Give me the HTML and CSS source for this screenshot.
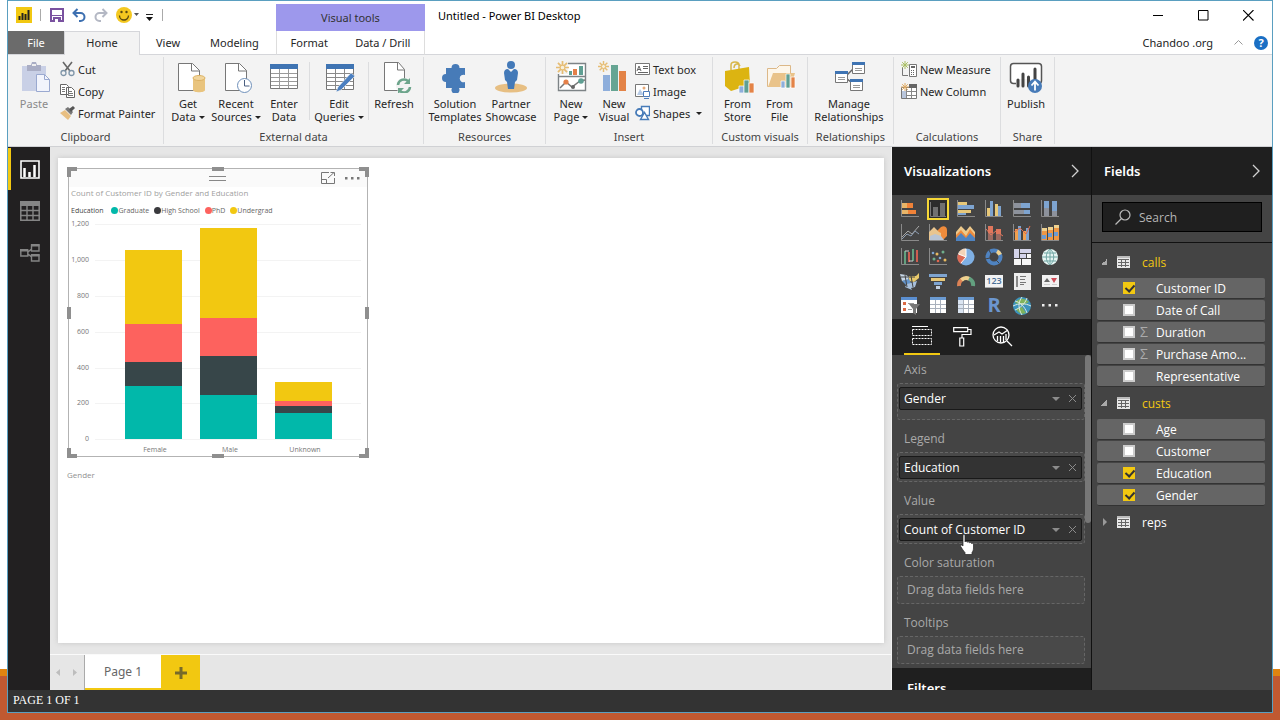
FILE: index.html
```html
<!DOCTYPE html>
<html lang="en">
<head>
<meta charset="utf-8">
<title>Untitled - Power BI Desktop</title>
<link rel="stylesheet" href="styles.css">
</head>
<body>
<svg class="sprites" aria-hidden="true">
  <symbol id="burst" viewBox="0 0 12 12"><path d="M6 0v12M0 6h12M1.8 1.8l8.4 8.4M10.2 1.8l-8.4 8.4" stroke="#e6bd74" stroke-width="1.6"/><circle cx="6" cy="6" r="2.2" fill="#f7efdc" stroke="#e6bd74"/></symbol>
  <symbol id="axes" viewBox="0 0 20 18"><path d="M1.500 0v16.500H19" fill="none" stroke="#8a8a8a"/></symbol>
  <symbol id="table" viewBox="0 0 13 12"><path d="M0 0h13v12H0z" fill="#e8e8e8"/><path d="M0 0h13v2H0z" fill="#bbb"/><path d="M1 3.500h11M1 6.500h11M1 9.500h11M4.500 3v8M8.500 3v8" stroke="#666"/></symbol>
  <symbol id="cross" viewBox="0 0 9 9"><path d="M1 1l7 7M8 1L1 8" stroke="#8c8c8c"/></symbol>
  <symbol id="chevron" viewBox="0 0 8 14"><path d="M1 1l6 6-6 6" fill="none" stroke="#d0d0d0" stroke-width="1.300"/></symbol>
</svg>
<div class="window">
  <header class="header">
    <div class="quick">
      <svg class="logo" width="16" height="16" viewBox="0 0 16 16"><path d="M0 0h16v16H0z" fill="#f2c811"/><path d="M3.500 13V9M6.500 13V6M9.500 13V7M12.500 13V3" stroke="#222" stroke-width="2"/></svg>
      <span class="bar"></span>
      <button class="qbtn" aria-label="Save"><svg width="14" height="14" viewBox="0 0 14 14"><path d="M1 1h12v12H1z" fill="#fff" stroke="#7a52a0" stroke-width="2"/><path d="M2 7h10v1H2zM3 9h8v5H3z" fill="#7a52a0"/><path d="M5 11h3v3H5z" fill="#fff"/></svg></button>
      <button class="qbtn" aria-label="Undo"><svg width="14" height="14" viewBox="0 0 14 14"><path d="M1 5h7.500a4 4 0 0 1 0 8H7M5.500 1l-4 4 4 4" fill="none" stroke="#3c6fb0" stroke-width="2"/></svg></button>
      <button class="qbtn" aria-label="Redo"><svg width="14" height="14" viewBox="0 0 14 14"><path d="M13 5H5.500a4 4 0 0 0 0 8H7M8.500 1l4 4-4 4" fill="none" stroke="#b4b8c4" stroke-width="2"/></svg></button>
      <button class="qbtn smile" aria-label="Send feedback"><svg width="23" height="16" viewBox="0 0 23 16"><circle cx="8" cy="8" r="8" fill="#f4c820"/><path d="M3.500 8.500a4.500 4.500 0 0 0 9 0" fill="none" stroke="#5b4a10" stroke-width="1.300"/><circle cx="5.500" cy="5" r="1.200" fill="#5b4a10"/><circle cx="10.500" cy="5" r="1.200" fill="#5b4a10"/><path d="M18 6h5l-2.500 3z" fill="#555"/></svg></button>
      <button class="qbtn" aria-label="Customize toolbar"><svg width="8" height="14" viewBox="0 0 8 14"><path d="M0 6.500h7" stroke="#222"/><path d="M0 9h7l-3.500 4z" fill="#111"/></svg></button>
      <span class="bar"></span>
    </div>
    <div class="context-title">Visual tools</div>
    <div class="caption">
      <span class="app-title">Untitled - Power BI Desktop</span>
      <button class="winbtn" aria-label="Minimize"><svg width="11" height="11"><path d="M0 5.500h10" stroke="#000"/></svg></button>
      <button class="winbtn" aria-label="Maximize"><svg width="11" height="11"><path d="M.5.500h9.500v9.500H.5z" fill="none" stroke="#000"/></svg></button>
      <button class="winbtn" aria-label="Close"><svg width="11" height="11"><path d="M0 0l10.500 10.500M10.500 0L0 10.500" stroke="#000" stroke-width="1.100"/></svg></button>
    </div>
    <nav class="tabs">
      <button class="tab file">File</button><button class="tab home">Home</button><button class="tab view">View</button><button class="tab">Modeling</button>
    </nav>
    <nav class="tabs context"><button class="tab">Format</button><button class="tab">Data / Drill</button></nav>
    <div class="account">
      <span>Chandoo .org</span>
      <button class="qbtn" aria-label="Collapse ribbon"><svg width="9" height="5"><path d="M.5 4.500l4-4 4 4" fill="none" stroke="#999"/></svg></button>
      <button class="help" aria-label="Help">?</button>
    </div>
  </header>

  <section class="ribbon">
    <div class="group g-clip">
      <div class="body">
        <button class="big off"><svg width="36" height="32"><path d="M6 5h24v25H6z" fill="#c9d0e6"/><path d="M11 4h4l1-3h4l1 3h4v6H11z" fill="#a9adc4"/><path d="M16 3h4v2h-4z" fill="#eee"/><path d="M20.500 13.500h8l5 5v12h-13z" fill="#f2f4fc" stroke="#9aa9d0"/><path d="M28.500 13.500v5h5" fill="none" stroke="#9aa9d0"/></svg><span>Paste</span></button>
        <div class="stack">
          <button class="small"><svg width="15" height="16"><path d="M3 1l7 9M12 1L5 10" stroke="#666" stroke-width="1.600"/><circle cx="3.500" cy="12" r="2.500" fill="none" stroke="#7f95a8" stroke-width="1.300"/><circle cx="11.500" cy="12" r="2.500" fill="none" stroke="#7f95a8" stroke-width="1.300"/></svg>Cut</button>
          <button class="small"><svg width="15" height="16"><path d="M.5 1.500h6l2 2v8h-8zM6.500 4.500h5l3 3v7h-8z" fill="#fff" stroke="#666"/><path d="M2 4.500h3M2 6.500h3M2 8.500h3M8 8.500h4M8 10.500h5M8 12.500h5" stroke="#777"/></svg>Copy</button>
          <button class="small"><svg width="15" height="16"><path d="M0 8l5-3 6 6-3 4z" fill="#e8bf82"/><path d="M5 4l3-2 5 5-2 3z" fill="#777"/><path d="M9 4l4-3 2 2-4 4z" fill="#555"/></svg>Format Painter</button>
        </div>
      </div>
      <h2>Clipboard</h2>
    </div>
    <div class="group g-data">
      <div class="body">
        <button class="big"><svg width="36" height="32"><path d="M8.500 2.500h14l7 7v20h-21z" fill="#fff" stroke="#777"/><path d="M21.500 2.500v7.500h8" fill="none" stroke="#777"/><path d="M23 17v12c0 3 12 3 12 0V17z" fill="#e9c47e"/><ellipse cx="29" cy="17" rx="6" ry="2.500" fill="#f1d59c" stroke="#dcb264"/></svg><span>Get<br>Data<i class="drop"></i></span></button>
        <button class="big"><svg width="36" height="32"><path d="M7.500 2.500h14l7 7v20h-21z" fill="#fff" stroke="#777"/><path d="M20.500 2.500v7.500h8" fill="none" stroke="#777"/><circle cx="26.500" cy="24.500" r="7" fill="#fff" stroke="#6f90ba"/><path d="M26.500 19v6h5" fill="none" stroke="#4a5f80"/></svg><span>Recent<br>Sources<i class="drop"></i></span></button>
        <button class="big"><svg width="36" height="32"><path d="M4.500 3.500h27v24h-27z" fill="#fff" stroke="#777"/><path d="M4 3h28v5H4z" fill="#3f74b3"/><path d="M5 12.500h26M5 16.500h26M5 20.500h26M5 24.500h26M13.500 8v19M22.500 8v19" stroke="#9a9a9a"/></svg><span>Enter<br>Data</span></button>
        <span class="rule"></span>
        <button class="big w56"><svg width="36" height="32"><path d="M5.500 3.500h27v25h-27z" fill="#fff" stroke="#777"/><path d="M5 3h28v5H5z" fill="#3f74b3"/><path d="M6 12.500h26M6 16.500h26M6 20.500h26M6 24.500h26M14.500 8v20M23.500 8v20" stroke="#8a8a8a"/><path d="M15 31l2-5L30 12l4 3-14 14z" fill="#4b7fc0" stroke="#f3f3f3" stroke-width=".6"/></svg><span>Edit<br>Queries<i class="drop"></i></span></button>
        <span class="rule"></span>
        <button class="big"><svg width="36" height="32"><path d="M8.500 1.500h14l6 7v21h-20z" fill="#fff" stroke="#777"/><path d="M21.500 1.500v7.500h7" fill="none" stroke="#777"/><circle cx="28" cy="25" r="8" fill="#f3f3f3"/><path d="M22 24a6 6 0 0 1 10-4M34 26a6 6 0 0 1-10 4" fill="none" stroke="#6da58c" stroke-width="2.500"/><path d="M34 17v6h-6zM22 33v-6h6z" fill="#6da58c"/></svg><span>Refresh</span></button>
      </div>
      <h2>External data</h2>
    </div>
    <div class="group g-res">
      <div class="body center">
        <button class="big w56"><svg width="36" height="32"><path d="M9 7h5.500a4 4 0 1 1 8 0H28v7a3.800 3.800 0 1 0 0 7v6h-6a4 4 0 1 1-7 0H9v-6a4 4 0 1 1 0-8z" fill="#477bb8"/></svg><span>Solution<br>Templates</span></button>
        <button class="big w56"><svg width="36" height="32"><ellipse cx="18" cy="27" rx="16" ry="4.500" fill="#e7bf83"/><circle cx="18" cy="4" r="4" fill="#4379b8"/><path d="M15 8l3 3 3-3c3 0 4 2 4 4l-1 7-2 2-1 7h-6l-1-7-2-2-1-7c0-2 1-4 4-4z" fill="#4379b8"/></svg><span>Partner<br>Showcase</span></button>
      </div>
      <h2>Resources</h2>
    </div>
    <div class="group g-ins">
      <div class="body">
        <button class="big w44"><svg width="36" height="32"><path d="M5.500 2.500h27v27h-27zM5 15.500h27" fill="#fff" stroke="#7d8386" stroke-width="1.400"/><path d="M16 10h3v4h-3zM26 5h4v9h-4z" fill="#5f9f93"/><path d="M20 8h4v6h-4z" fill="#e48049"/><path d="M7 27l6-6 6 5 8-6 5-1" fill="none" stroke="#777" stroke-width="1.500"/><circle cx="13" cy="21" r="2.600" fill="#e48049"/><circle cx="20" cy="26" r="2" fill="#666"/><circle cx="28" cy="20" r="2.800" fill="#5f9f93"/><path d="M3 0h12v13H3z" fill="#f3f3f3"/><use href="#burst" x="3" y="0" width="13" height="13"/></svg><span>New<br>Page<i class="drop"></i></span></button>
        <button class="big w42"><svg width="36" height="32"><path d="M7 14h7v16H7z" fill="#8eaedb"/><path d="M15 4h7v26h-7z" fill="#66a593"/><path d="M23 10h7v20h-7z" fill="#e38347"/><use href="#burst" x="2" y="0" width="11" height="11"/></svg><span>New<br>Visual</span></button>
        <div class="stack">
          <button class="small"><svg width="15" height="16"><path d="M.5 2.500h14v11H.5z" fill="#fff" stroke="#777"/><path d="M2 10l2-5 2 5M3 8.500h2M8 5.500h5M8 7.500h5M3 11.500h10" fill="none" stroke="#666"/></svg>Text box</button>
          <button class="small"><svg width="15" height="16"><path d="M.5 1.500h13v12H.5z" fill="#fff" stroke="#777"/><circle cx="9" cy="5" r="1.500" fill="#e6a877"/><path d="M2 12l3-6 4 6z" fill="#b7cbe6"/><path d="M8.500 8.500h6v5h-6zM9 15.500h5" fill="#fff" stroke="#4f7dbb"/></svg>Image</button>
          <button class="small"><svg width="15" height="16"><path d="M6.500 1.500h8v9h-8z" fill="#fff" stroke="#477bb8" stroke-width="1.400"/><circle cx="4.500" cy="7.500" r="3.500" fill="#fff" stroke="#477bb8" stroke-width="1.800"/><path d="M5.500 14.500l4-7 4 7z" fill="#fff" stroke="#477bb8" stroke-width="1.400"/></svg>Shapes<i class="drop"></i></button>
        </div>
      </div>
      <h2>Insert</h2>
    </div>
    <div class="group g-cust">
      <div class="body center">
        <button class="big w42"><svg width="36" height="32"><path d="M11 9V4c0-4 8-4 8 0v4M14 7c0-5 5-5 6-2" fill="none" stroke="#d8b74a" stroke-width="1.500"/><path d="M5 10l24-4 1 18-19 6-6-5z" fill="#dcb411"/><path d="M19 25h5v7h-5z" fill="#8eaedb" stroke="#fff" stroke-width=".7"/><path d="M24 19h5v13h-5z" fill="#5f9f93" stroke="#fff" stroke-width=".7"/><path d="M29 22h5v10h-5z" fill="#e38347" stroke="#fff" stroke-width=".7"/></svg><span>From<br>Store</span></button>
        <button class="big w42"><svg width="36" height="32"><path d="M5.500 25.500v-18h9l3-3h11v21z" fill="#fdf6ea" stroke="#dcb888"/><path d="M6 26l5-14h22l-4 14z" fill="#e9c38a"/><path d="M19 20h4v7h-4z" fill="#8eaedb" stroke="#fff" stroke-width=".7"/><path d="M24 13h4v14h-4z" fill="#5f9f93" stroke="#fff" stroke-width=".7"/><path d="M29 16h4v11h-4z" fill="#e38347" stroke="#fff" stroke-width=".7"/></svg><span>From<br>File</span></button>
      </div>
      <h2>Custom visuals</h2>
    </div>
    <div class="group g-rel">
      <div class="body center">
        <button class="big wide"><svg width="36" height="32"><path d="M15 15l8-8M15 17l6 5" stroke="#666" stroke-width="1.500"/><path d="M21.500 1.500h12v11h-12zM4.500 10.500h12v11h-12zM19.500 18.500h12v11h-12z" fill="#fff" stroke="#777"/><path d="M21 1h13v3H21zM4 10h13v3H4zM19 18h13v3H19z" fill="#3f74b3"/><path d="M24 7.500h7M24 9.500h7M7 16.500h7M7 18.500h7M22 24.500h7M22 26.500h7" stroke="#999"/></svg><span>Manage<br>Relationships</span></button>
      </div>
      <h2>Relationships</h2>
    </div>
    <div class="group g-calc">
      <div class="body">
        <div class="stack">
          <button class="small"><svg width="16" height="16"><path d="M1.500 6v8.500H7" fill="none" stroke="#777"/><path d="M8.500 3.500h7v12h-7z" fill="#fff" stroke="#777"/><path d="M10 5h4v2h-4zM10 9h1v1h-1zM12 9h1v1h-1zM10 11h1v1h-1zM12 11h1v1h-1zM10 13h1v1h-1zM12 13h1v1h-1z" fill="#666"/><path d="M4 0v8M0 4h8M1.200 1.200l5.600 5.600M6.800 1.200L1.200 6.800" stroke="#a9bf63"/></svg>New Measure</button>
          <button class="small"><svg width="16" height="16"><path d="M.5 4.500h15v11H.5z" fill="#fff" stroke="#777"/><path d="M8 1h8v4H8z" fill="#666"/><path d="M1 8h4v7H1z" fill="#b9c6dc"/><path d="M5.500 5v10M10.500 5v10M5 8.500h10M5 12.500h10" stroke="#888"/><path d="M4 0v8M0 4h8M1.200 1.200l5.600 5.600M6.800 1.200L1.200 6.800" stroke="#e0aa62"/></svg>New Column</button>
        </div>
      </div>
      <h2>Calculations</h2>
    </div>
    <div class="group g-share">
      <div class="body center">
        <button class="big"><svg width="36" height="32"><rect x="2.500" y="2.500" width="31" height="20" rx="3" fill="#fff" stroke="#555" stroke-width="1.500"/><path d="M8 18h22v7H8z" fill="#f3f3f3"/><path d="M10 25v-6M15 25V13M20.500 25v-9M27 20V8" stroke="#444" stroke-width="3" stroke-linecap="round"/><circle cx="27" cy="25" r="7" fill="#477bb8"/><path d="M27 29.500v-8M23.500 24.500l3.500-4 3.500 4" fill="none" stroke="#fff" stroke-width="1.800"/></svg><span>Publish</span></button>
      </div>
      <h2>Share</h2>
    </div>
  </section>

  <main class="work">
    <nav class="rail">
      <button class="on" aria-label="Report"><svg width="20" height="19"><path d="M1 1h18v17H1z" fill="none" stroke="#fff" stroke-width="1.600"/><path d="M4.500 17V8M9.500 17v-5M14.500 17V5" stroke="#fff" stroke-width="2.500"/></svg></button>
      <button aria-label="Data"><svg width="20" height="20"><path d="M.8.800h18.400v18.400H.8z" fill="none" stroke="#858585" stroke-width="1.500"/><path d="M0 0h20v5H0z" fill="#858585"/><path d="M0 9.500h20M0 14.500h20M7 5v15M13 5v15" stroke="#858585" stroke-width="1.400"/></svg></button>
      <button aria-label="Relationships"><svg width="20" height="18"><path d="M.8 6h7v6h-7zM11.500 1h7.500v6h-7.500zM11.500 11h7.500v6h-7.500zM8 8l3.500-3M8 10l3.500 3" fill="none" stroke="#858585" stroke-width="1.400"/><path d="M0 5h8v2.500H0zM11 0h8.500v2.500H11zM11 10h8.500v2.500H11z" fill="#858585"/></svg></button>
    </nav>

    <section class="report">
      <div class="page">
        <figure class="visual">
          <div class="grips"><i></i><i></i><i></i><i></i><i></i><i></i><i></i><i></i></div>
          <div class="vhead">
            <svg class="drag" width="17" height="5"><path d="M0 .5h17M0 4.500h17" stroke="#888"/></svg>
            <button class="qbtn" aria-label="Focus mode"><svg width="14" height="12"><path d="M8 .5H.5v11h13V6M.5 7.500h5v4M7 6l6-5.500M9.500.500h4v3.500" fill="none" stroke="#777"/></svg></button>
            <button class="qbtn" aria-label="More options"><svg width="15" height="3"><path d="M0 0h2.500v2.500H0zM6 0h2.500v2.500H6zM12 0h2.500v2.500H12z" fill="#777"/></svg></button>
          </div>
          <figcaption>Count of Customer ID by Gender and Education</figcaption>
          <div class="legend"><b>Education</b><span class="k teal">Graduate</span><span class="k dark">High School</span><span class="k red">PhD</span><span class="k gold">Undergrad</span></div>
          <svg class="plot" width="298" height="239" viewBox="0 0 298 239">
            <path d="M26 6.500h266M26 42.500h266M26 78.500h266M26 114.500h266M26 150.500h266M26 185.500h266M26 221.500h266" stroke="#f3f3f3"/>
            <g class="ticks" text-anchor="end"><text x="20" y="8">1,200</text><text x="20" y="44">1,000</text><text x="20" y="80">800</text><text x="20" y="116">600</text><text x="20" y="152">400</text><text x="20" y="187">200</text><text x="20" y="223">0</text></g>
            <path d="M56 32h57v74H56zM131 10h57v90h-57zM206 164h57v19h-57z" fill="#f2c811"/>
            <path d="M56 106h57v38H56zM131 100h57v38h-57zM206 183h57v5h-57z" fill="#fd625e"/>
            <path d="M56 144h57v24H56zM131 138h57v39h-57zM206 188h57v7h-57z" fill="#374649"/>
            <path d="M56 168h57v53H56zM131 177h57v44h-57zM206 195h57v26h-57z" fill="#01b8aa"/>
            <g class="ticks" text-anchor="middle"><text x="86" y="234">Female</text><text x="161" y="234">Male</text><text x="236" y="234">Unknown</text></g>
          </svg>
          <div class="axis-title">Gender</div>
        </figure>
      </div>
      <nav class="pages">
        <button class="step" aria-label="Previous page"><svg width="4" height="7"><path d="M4 0v7L0 3.500z" fill="#bdbdbd"/></svg></button>
        <button class="step next" aria-label="Next page"><svg width="4" height="7"><path d="M0 0v7l4-3.500z" fill="#bdbdbd"/></svg></button>
        <button class="ptab">Page 1</button>
        <button class="add" aria-label="New page"><svg width="12" height="12"><path d="M6 0v12M0 6h12" stroke="#776a2a" stroke-width="3"/></svg></button>
      </nav>
    </section>

    <aside class="pane viz">
      <h2 class="phead">Visualizations<button class="qbtn" aria-label="Collapse Visualizations"><svg width="8" height="14"><use href="#chevron"/></svg></button></h2>
      <div class="gallery">
        <button aria-label="Stacked bar chart"><svg width="20" height="18"><use href="#axes"/><path d="M2 3h5v5H2zM2 10h6v4H2z" fill="#e8b568"/><path d="M7 3h6v5H7zM8 10h8v4H8z" fill="#f08238"/></svg></button>
        <button class="on" aria-label="Stacked column chart"><svg width="18" height="18"><path d="M1.500 2v14.500H17" fill="none" stroke="#777"/><path d="M4 7h5v9H4zM11 3h5v13h-5z" fill="#707070"/></svg></button>
        <button aria-label="Clustered bar chart"><svg width="20" height="18"><use href="#axes"/><path d="M2 2h9v3H2zM2 10h13v3H2z" fill="#e8c878"/><path d="M2 5h16v4H2zM2 13h8v2H2z" fill="#7ea4d0"/></svg></button>
        <button aria-label="Clustered column chart"><svg width="20" height="18"><use href="#axes"/><path d="M3 8h3v8H3zM11 4h3v12h-3z" fill="#e8c878"/><path d="M6 1h3v15H6zM14 6h3v10h-3z" fill="#7ea4d0"/></svg></button>
        <button aria-label="100% stacked bar chart"><svg width="20" height="18"><use href="#axes"/><path d="M2 3h7v5H2zM2 10h10v4H2z" fill="#8d929c"/><path d="M9 3h9v5H9zM12 10h6v4h-6z" fill="#7ea4d0"/></svg></button>
        <button aria-label="100% stacked column chart"><svg width="20" height="18"><use href="#axes"/><path d="M4 1h5v7H4zM12 1h5v10h-5z" fill="#7ea4d0"/><path d="M4 8h5v8H4zM12 11h5v5h-5z" fill="#8d929c"/></svg></button>
        <button aria-label="Line chart"><svg width="20" height="18"><use href="#axes"/><path d="M2 13l6-6 4 3 7-8" fill="none" stroke="#aaa"/><path d="M2 15l5-5 4 2 4-5 4 3" fill="none" stroke="#8f9fb4"/></svg></button>
        <button aria-label="Area chart"><svg width="20" height="18"><use href="#axes"/><path d="M8 16V8l5-5c3-2 6 0 6 3v6l-4 4z" fill="#ee8b3c"/><path d="M1 8l5-5 5 5 2 1v7H1z" fill="#e8c590"/><path d="M2 16v-4l5-2 6 2 3 4z" fill="#b9c4d4"/></svg></button>
        <button aria-label="Stacked area chart"><svg width="20" height="18"><path d="M0 16V8l5-6 5 5 4-5 5 6v8z" fill="#ecc98c"/><path d="M0 11l5-5 5 6 4-7 5 6v4H0z" fill="#ee8b3c"/><path d="M0 14l5-5 5 5 4-5 5 5v3H0z" fill="#4f83c0"/></svg></button>
        <button aria-label="Line and stacked column chart"><svg width="20" height="18"><use href="#axes"/><path d="M4 2h5v7H4zM12 5h5v5h-5z" fill="#e0765c"/><path d="M4 9h5v7H4zM12 10h5v6h-5z" fill="#9c6a60"/><path d="M2 5l5 6 5-4 7 5" fill="none" stroke="#e0765c"/></svg></button>
        <button aria-label="Line and clustered column chart"><svg width="20" height="18"><use href="#axes"/><path d="M3 5h3v11H3zM11 7h3v9h-3z" fill="#f0a050"/><path d="M6 2h3v14H6zM14 4h3v12h-3z" fill="#7ea4d0"/><path d="M2 8l6-4 6 6 4-8" fill="none" stroke="#e06a4b"/></svg></button>
        <button aria-label="Ribbon chart"><svg width="20" height="18"><use href="#axes"/><path d="M2 6h5v10H2zM8 5h5v11H8zM14 2h5v14h-5z" fill="#ef9744"/><path d="M2 11h4v4H2zM8 9h4v4H8zM14 8h4v4h-4z" fill="#6b9bd2"/><path d="M2 4h5v3H2zM8 3h5v3H8zM14 1h5v3h-5z" fill="#eed18f"/></svg></button>
        <button aria-label="Waterfall chart"><svg width="20" height="18"><use href="#axes"/><path d="M5 16V3M13 13V1" stroke="#63a07f" stroke-width="2"/><path d="M9 4v10M17 2v12" stroke="#cf5d50" stroke-width="2"/><path d="M5 3h4M9 13h4" stroke="#ccc"/></svg></button>
        <button aria-label="Scatter chart"><svg width="20" height="18"><use href="#axes"/><g fill="#7ea4d0"><circle cx="5" cy="5" r="1.300"/><circle cx="12" cy="10" r="1.300"/></g><g fill="#e8b95f"><circle cx="9" cy="6" r="1.500"/><circle cx="17" cy="12" r="1.500"/></g><g fill="#6fae8b"><circle cx="6" cy="11" r="1.500"/><circle cx="15" cy="4" r="1.500"/></g><circle cx="10" cy="13" r="1.300" fill="#e0664f"/></svg></button>
        <button aria-label="Pie chart"><svg width="20" height="18"><circle cx="10" cy="9" r="8.500" fill="#7fb0e4"/><path d="M10 9V.5A8.500 8.500 0 0 0 2 6z" fill="#f3d4b8"/><path d="M10 9L2 6a8.500 8.500 0 0 0 3 10z" fill="#dc6a55"/><path d="M10 1v8l-5 6M10 9L2.500 6" fill="none" stroke="#fff"/></svg></button>
        <button aria-label="Donut chart"><svg width="20" height="18"><circle cx="10" cy="9" r="6.500" fill="none" stroke="#4f83c0" stroke-width="4"/><path d="M13 3.200a6.500 6.500 0 0 1 3 3.500" fill="none" stroke="#eed18f" stroke-width="4"/><path d="M5 2l2 4M1 11l5-1M15 15l-3-3" stroke="#444"/></svg></button>
        <button aria-label="Treemap"><svg width="20" height="18"><path d="M2 1h5v9H2zM8 1h11v4H8zM8 6h6v4H8z" fill="#d4d4ea"/><path d="M15 6h4v4h-4zM2 11h7v6H2zM10 11h9v6h-9z" fill="#f6f6f6"/></svg></button>
        <button aria-label="Map"><svg width="20" height="18"><circle cx="10" cy="9" r="8" fill="#e6f5f3"/><path d="M2 9h16M4 5h12M4 13h12M10 1v16M10 1c-5 4-5 12 0 16 5-4 5-12 0-16" fill="none" stroke="#6fa5a3"/></svg></button>
        <button aria-label="Filled map"><svg width="20" height="18"><path d="M0 2l6 1 3 2-1 3-6 1z" fill="#c8d8e8"/><path d="M9 4l7 0 3-3v5l-5 4-5-1z" fill="#e8c96b"/><path d="M2 9l7-2 2 4-5 2z" fill="#6394cc"/><path d="M7 12l10-3-2 6-4 1 1 2-7-3z" fill="#a8c0dc"/><path d="M1 5h14M5 3l2 12M11 4l2 11" stroke="#444"/></svg></button>
        <button aria-label="Funnel"><svg width="20" height="18"><path d="M1 2h18v3H1z" fill="#7ea4d0"/><path d="M3 6h14v3H3z" fill="#e8c878"/><path d="M6 10h8v3H6z" fill="#7ea4d0"/><path d="M8 14h4v3H8z" fill="#c3d0e0"/></svg></button>
        <button aria-label="Gauge"><svg width="20" height="18"><path d="M3 14a7 7 0 0 1 4-7" fill="none" stroke="#dc8255" stroke-width="4"/><path d="M5.500 8a7 7 0 0 1 8-1" fill="none" stroke="#eed18f" stroke-width="4"/><path d="M13 6.500a7 7 0 0 1 4 7.500" fill="none" stroke="#63a07f" stroke-width="4"/></svg></button>
        <button class="card" aria-label="Card"><span>123</span></button>
        <button aria-label="Multi-row card"><svg width="20" height="18"><path d="M2 1h17v17H2z" fill="#eee"/><path d="M4 4h2v11H4z" fill="#888"/><path d="M8 4.500h6M8 7.500h5M8 10.500h6M8 12.500h4" stroke="#777"/></svg></button>
        <button aria-label="KPI"><svg width="20" height="18"><path d="M2 3h17v12H2z" fill="#f1f1f1"/><path d="M4 10l3-4 3 4z" fill="#666"/><path d="M11 6h6l-3 5z" fill="#cf4c58"/><path d="M4 12.500h6M12 12.500h5" stroke="#ccc"/></svg></button>
        <button aria-label="Slicer"><svg width="20" height="19"><path d="M1 1h16v16H1z" fill="#fff"/><path d="M1 1h16v3H1z" fill="#5a8ed0"/><path d="M3 6h3v3H3zM3 12h3v3H3z" fill="#dc6a45"/><path d="M8 7.500h6M8 13.500h4" stroke="#999"/><path d="M9 8h11l-4 5v6l-3-2v-4z" fill="#777"/></svg></button>
        <button aria-label="Table"><svg width="20" height="18"><path d="M2 1h16v16H2z" fill="#fff"/><path d="M2 1h16v3H2z" fill="#6b9bd2"/><path d="M2 8.500h16M2 12.500h16M7.500 4v13M12.500 4v13" stroke="#a8b0bc"/></svg></button>
        <button aria-label="Matrix"><svg width="20" height="18"><path d="M2 1h16v16H2z" fill="#fff"/><path d="M2 1h16v3H2z" fill="#6b9bd2"/><path d="M2 4h5v13H2z" fill="#dbe5f2"/><path d="M2 8.500h16M2 12.500h16M7.500 4v13M12.500 4v13" stroke="#a8b0bc"/></svg></button>
        <button class="rscript" aria-label="R script visual"><span>R</span></button>
        <button aria-label="ArcGIS map"><svg width="20" height="19"><circle cx="10" cy="10" r="9" fill="#3c93bd"/><path d="M3 7c4-6 10-5 14-1l-6 3zM4 13l6-2 4 6c-4 2-8 0-10-4z" fill="#7fb35c"/><path d="M1 10c6-3 12-3 18 0M3 5c5 1 10 6 12 12M10 1c-4 5-4 12 0 18M3 14c5-2 10-6 12-12" fill="none" stroke="#dbe9e2"/></svg></button>
        <button aria-label="Import visual"><svg width="16" height="3"><path d="M0 0h2.500v2.500H0zM6.500 0H9v2.500H6.500zM13 0h2.500v2.500H13z" fill="#eee"/></svg></button>
      </div>
      <div class="ptabs">
        <button class="on" aria-label="Fields"><svg width="20" height="20"><path d="M0 .5h16" stroke="#fff"/><path d="M.5 3.500h19v6H.5zM.5 12.500h19v6H.5z" fill="none" stroke="#fff" stroke-dasharray="2 1"/></svg></button>
        <button aria-label="Format"><svg width="19" height="21"><path d="M.7 1.700h14v4h-14zM15 3.500h3v5H9v3M6.800 12h3.900v8H6.800z" fill="none" stroke="#fff" stroke-width="1.200"/></svg></button>
        <button aria-label="Analytics"><svg width="21" height="21"><circle cx="9" cy="9" r="8" fill="none" stroke="#fff" stroke-width="1.300"/><path d="M15 15l5 5M2 9l5-3 3 2 6-4M5.500 10v5M8.500 10v6.500M11.500 10v6M14 8v6" fill="none" stroke="#fff" stroke-width="1.300"/></svg></button>
      </div>
      <div class="wells">
        <h3>Axis</h3>
        <div class="well roomy"><div class="pill"><span>Gender</span><button class="qbtn" aria-label="Gender options"><i class="tri"></i></button><button class="qbtn" aria-label="Remove Gender"><svg width="9" height="9"><use href="#cross"/></svg></button></div></div>
        <h3>Legend</h3>
        <div class="well"><div class="pill"><span>Education</span><button class="qbtn" aria-label="Education options"><i class="tri"></i></button><button class="qbtn" aria-label="Remove Education"><svg width="9" height="9"><use href="#cross"/></svg></button></div></div>
        <h3>Value</h3>
        <div class="well"><div class="pill"><span>Count of Customer ID</span><button class="qbtn" aria-label="Value options"><i class="tri"></i></button><button class="qbtn" aria-label="Remove value"><svg width="9" height="9"><use href="#cross"/></svg></button></div>
          <svg class="pointer" width="15" height="21" viewBox="0 0 15 21"><path d="M3 1.500c0-1.300 2-1.300 2 0V8c.5-1 2-.8 2.200.3.500-.8 2-.6 2.200.5.600-.7 2-.4 2.100.7.700-.4 2 .1 2 1.200V14c0 2-.8 3.500-1.500 4.500v2H5v-2C3.500 17 2 14.500.7 12.500-.2 11 1.500 10.400 3 12z" fill="#fff" stroke="#222" stroke-width=".7"/></svg>
        </div>
        <h3>Color saturation</h3>
        <div class="well empty">Drag data fields here</div>
        <h3>Tooltips</h3>
        <div class="well empty">Drag data fields here</div>
        <h2 class="filters">Filters</h2>
        <i class="thumb"></i>
      </div>
    </aside>

    <aside class="pane fields">
      <h2 class="phead">Fields<button class="qbtn" aria-label="Collapse Fields"><svg width="8" height="14"><use href="#chevron"/></svg></button></h2>
      <div class="search"><label><svg width="16" height="16"><circle cx="10" cy="6" r="5" fill="none" stroke="#bbb" stroke-width="1.200"/><path d="M6.500 9.500L.5 15.500" stroke="#bbb" stroke-width="1.200"/></svg><input type="text" placeholder="Search" aria-label="Search"></label></div>
      <div class="tree">
        <h3 class="used"><i class="open"></i><svg width="13" height="12"><use href="#table"/></svg>calls</h3>
        <label class="field"><input type="checkbox" checked><i></i><span>Customer ID</span></label>
        <label class="field"><input type="checkbox"><i></i><span>Date of Call</span></label>
        <label class="field"><input type="checkbox"><i>Σ</i><span>Duration</span></label>
        <label class="field"><input type="checkbox"><i>Σ</i><span>Purchase Amo...</span></label>
        <label class="field"><input type="checkbox"><i></i><span>Representative</span></label>
        <h3 class="used"><i class="open"></i><svg width="13" height="12"><use href="#table"/></svg>custs</h3>
        <label class="field"><input type="checkbox"><i></i><span>Age</span></label>
        <label class="field"><input type="checkbox"><i></i><span>Customer</span></label>
        <label class="field"><input type="checkbox" checked><i></i><span>Education</span></label>
        <label class="field"><input type="checkbox" checked><i></i><span>Gender</span></label>
        <h3><i class="shut"></i><svg width="13" height="12"><use href="#table"/></svg>reps</h3>
      </div>
    </aside>
  </main>
  <footer class="status">PAGE 1 OF 1</footer>
</div>
</body>
</html>
```
FILE: styles.css
```css
* { box-sizing: border-box; }
body {
  margin: 0;
  min-height: 100vh;
  padding: 0 7px 7px;
  background: linear-gradient(to top, #c05931 44px, #e08410 44px, #e08410 51px, #fff 51px);
  font-family: "Noto Sans", "Open Sans", sans-serif;
  font-size: 12px;
  color: #262626;
}
h2, h3, figure { margin: 0; font-weight: 400; }
button { border: 0; padding: 0; margin: 0; background: none; font: inherit; color: inherit; }
svg { display: block; flex: none; }
.sprites { position: absolute; width: 0; height: 0; }
.window { display: flex; flex-direction: column; height: calc(100vh - 7px); border: 1px solid #5a9fc0; background: #fff; }

/* title bar and ribbon tabs */
.header { display: grid; grid-template-columns: 268px 149px 1fr; grid-template-rows: 30px 24px; font-size: 11px; }
.quick { display: flex; align-items: center; gap: 8px; padding: 0 0 2px 8px; }
.bar { width: 1px; height: 12px; background: #aaa; }
.quick .bar + .qbtn { margin-left: 1px; }
.quick .smile { margin-right: -1px; }
.qbtn { display: flex; align-items: center; justify-content: center; }
.context-title { margin-top: 3px; background: #9d98ec; display: flex; align-items: center; justify-content: center; color: #333; font-size: 11px; }
.caption { display: flex; align-items: center; padding-bottom: 2px; }
.app-title { flex: 1; padding-left: 13px; color: #000; }
.winbtn { width: 45px; height: 28px; display: flex; align-items: center; justify-content: center; }
.caption .winbtn:last-child { margin-right: 1px; }
.tabs { display: flex; border-bottom: 1px solid #d5d6da; }
.tab { padding: 0 14px; }
.tab.file { width: 56px; background: #6b6b6b; color: #fff; }
.tab.home { width: 76px; margin-bottom: -1px; padding-bottom: 2px; background: #f3f3f3; border: 1px solid #d5d6da; border-bottom: 0; }
.tab.view { width: 56px; }
.context { border-left: 1px solid #ddd; border-right: 1px solid #ddd; }
.context .tab { padding: 0 13px; flex: auto; white-space: nowrap; }
.account { display: flex; align-items: center; justify-content: flex-end; border-bottom: 1px solid #d5d6da; padding-right: 4px; }
.account span { margin-right: 21px; color: #222; }
.account .help { width: 14px; height: 14px; margin-left: 11px; border-radius: 50%; background: #1a6fc4; color: #fff; font-weight: 700; font-size: 11px; line-height: 14px; }

/* ribbon */
.ribbon { display: flex; flex: none; background: #f3f3f3; border-bottom: 1px solid #d0d1d4; font-size: 11px; }
.group { display: flex; flex-direction: column; flex: none; margin: 2px 0; border-right: 1px solid #dcdddf; }
.group h2 { font-size: 11px; line-height: 14px; text-align: center; color: #444; white-space: nowrap; }
.body { display: flex; height: 73px; padding-top: 1px; }
.center { justify-content: center; padding-right: 3px; }
.g-clip { width: 156px; }
.g-data { width: 260px; }
.g-res { width: 122px; }
.g-ins { width: 167px; }
.g-cust { width: 95px; }
.g-rel { width: 86px; }
.g-calc { width: 107px; }
.g-share { width: 54px; }
.g-ins .body { padding-left: 3px; }
.g-calc .body { padding-left: 7px; }
.big { width: 48px; padding-top: 3px; display: flex; flex-direction: column; align-items: center; gap: 4px; line-height: 13px; white-space: nowrap; }
.big.w56 { width: 56px; }
.big.w44 { width: 44px; }
.big.w42 { width: 42px; }
.big.wide { width: 72px; }
.g-clip .big { width: 52px; }
.off { color: #8a8a8a; }
.rule { width: 1px; margin: 4px 1px 10px; background: #dcdddf; }
.drop { display: inline-block; margin-left: 3px; border: 3px solid transparent; border-top-color: #222; border-bottom: 0; vertical-align: 2px; }
.stack { display: flex; flex-direction: column; }
.small { display: flex; align-items: center; gap: 3px; height: 22px; white-space: nowrap; }

/* workspace */
.work { flex: 1; min-height: 0; display: flex; }
.rail { width: 42px; padding-top: 1px; background: #222021; }
.rail button { display: flex; width: 100%; height: 42px; align-items: center; justify-content: center; border-left: 3px solid transparent; padding-right: 2px; }
.rail .on { border-color: #f2c811; }
.report { flex: 1; min-width: 0; display: flex; flex-direction: column; background: #e6e6e6; border-right: 1px solid #f2f2f2; }
.page { flex: 1; position: relative; margin: 11px 7px 11px 8px; background: #fff; box-shadow: 0 0 5px #c4c4c4; }

/* visual placed on the report page */
.visual { position: absolute; left: 10px; top: 10px; width: 300px; height: 289px; border: 1px solid #b3b3b3; color: #808080; font-family: "Open Sans", "Noto Sans", sans-serif; }
.grips i { position: absolute; background: #8f8f8f; }
.grips i:nth-child(-n+4) { width: 10px; height: 10px; background: none; border: 4px solid #8f8f8f; }
.grips i:nth-child(1) { left: -2px; top: -2px; border-right: 0; border-bottom: 0; }
.grips i:nth-child(2) { right: -2px; top: -2px; border-left: 0; border-bottom: 0; }
.grips i:nth-child(3) { left: -2px; bottom: -2px; border-right: 0; border-top: 0; }
.grips i:nth-child(4) { right: -2px; bottom: -2px; border-left: 0; border-top: 0; }
.grips i:nth-child(5), .grips i:nth-child(6) { width: 12px; height: 4px; left: calc(50% - 6px); }
.grips i:nth-child(7), .grips i:nth-child(8) { width: 4px; height: 12px; top: calc(50% - 6px); }
.grips i:nth-child(5) { top: -2px; }
.grips i:nth-child(6) { bottom: -2px; }
.grips i:nth-child(7) { left: -2px; }
.grips i:nth-child(8) { right: -2px; }
.vhead { display: flex; align-items: center; justify-content: flex-end; gap: 10px; height: 18px; padding-right: 7px; background: #fafafa; }
.drag { margin: 0 auto 0 140px; }
figcaption { padding-left: 2px; font-size: 8px; line-height: 12px; color: #a0a0a0; }
.legend { display: flex; align-items: center; height: 19px; padding: 4px 0 0 2px; font-size: 7px; line-height: 14px; color: #666; }
.legend b { font-weight: 500; color: #444; margin-right: 8px; }
.k { display: flex; align-items: center; margin-right: 5px; }
.k::before { content: ""; width: 7px; height: 7px; border-radius: 50%; background: currentColor; }
.teal::before { background: #01b8aa; }
.dark::before { background: #3a3a3e; }
.red::before { background: #fd625e; }
.gold::before { background: #f2c811; }
.ticks { font-size: 7px; fill: #777; }
.axis-title { margin: 12px 0 0 -2px; font-size: 8px; line-height: 12px; color: #909090; }

/* page tabs */
.pages { display: flex; height: 36px; border-top: 1px solid #fafafa; }
.step { width: 16px; display: flex; align-items: center; justify-content: center; }
.step.next { width: 19px; border-right: 1px solid #aaa; }
.ptab { width: 76px; background: #fff; border-bottom: 2px solid #f2c811; color: #666; }
.add { width: 39px; background: #f2c811; display: flex; align-items: center; justify-content: center; }

/* side panes */
.pane { flex: none; display: flex; flex-direction: column; background: #444; color: #fff; font-family: "Open Sans", "Noto Sans", sans-serif; }
.viz { width: 200px; border-right: 1px solid #111; }
.fields { width: 180px; }
.phead { flex: none; display: flex; align-items: center; justify-content: space-between; height: 48px; padding: 0 12px; background: #1f1f1f; font: 600 13px "Noto Sans", "Open Sans", sans-serif; }
.gallery { display: grid; grid-template-columns: repeat(6, 28px); grid-auto-rows: 24px; padding: 2px 4px; }
.gallery button { display: flex; align-items: center; justify-content: center; }
.gallery .on { border: 2px solid #f6d737; background: #2c2c2c; width: 22px; height: 22px; margin: 1px 3px; overflow: hidden; }
.card span { padding: 0 1px; background: #f2f2f2; color: #4a6f96; font-size: 9px; line-height: 12px; font-weight: 600; border-bottom: 1px solid #aaa; }
.rscript { font-size: 20px; line-height: 20px; font-weight: 700; color: #6b96cf; }
.ptabs { display: flex; gap: 4px; height: 36px; flex: none; padding: 0 12px; background: #1f1f1f; }
.ptabs button { width: 36px; display: flex; align-items: center; justify-content: center; border-bottom: 2px solid transparent; }
.ptabs .on { border-color: #f2c811; }
.wells { flex: 1; min-height: 0; position: relative; overflow: hidden; padding: 0 6px 0 5px; }
.wells h3 { padding: 9px 7px 3px; font-size: 12px; line-height: 20px; color: #a9a9a9; }
.wells h3:first-child { padding-top: 5px; }
.well { position: relative; border: 1px dashed #666; border-radius: 3px; padding: 3px 2px 2px 1px; min-height: 28px; background: #494949; }
.well.roomy { padding-bottom: 9px; }
.well.empty { padding: 0 9px; line-height: 26px; color: #a9a9a9; }
.pill { display: flex; align-items: center; gap: 8px; height: 23px; padding: 0 4px 0 4px; border: 1px solid #191919; border-radius: 2px; background: #333; }
.pill span { flex: 1; }
.tri { border: 4px solid transparent; border-top-color: #8c8c8c; border-bottom: 0; }
.pointer { position: absolute; left: 62px; top: 19px; z-index: 2; }
.filters { margin: 4px -6px 0 -5px; padding: 10px 15px; height: 60px; background: #1f1f1f; font: 600 13px/20px "Noto Sans", "Open Sans", sans-serif; }
.thumb { position: absolute; right: 0; top: 0; width: 6px; height: 168px; border-radius: 3px; background: #777; }

/* field list */
.search { padding: 7px 10px 10px; border-bottom: 1px solid #111; }
.search label { display: flex; align-items: center; gap: 8px; height: 30px; padding: 0 12px; border: 1px solid #000; background: #1f1f1f; }
.search input { flex: 1; min-width: 0; border: 0; padding: 0; background: none; font: inherit; color: #fff; }
.search input::placeholder { color: #b5b5b5; }
.tree { padding: 3px 7px 0 5px; }
.tree h3 { display: flex; align-items: center; height: 32px; font-size: 12px; }
.tree h3 svg { margin: 0 12px 0 9px; }
.used { color: #f2c811; }
.open { width: 6px; height: 6px; margin-left: 4px; margin-right: 1px; background: linear-gradient(135deg, transparent 50%, #aaa 50%); }
.shut { margin-left: 6px; margin-right: 1px; border: 4px solid transparent; border-left-color: #999; border-right: 0; }
.field { display: flex; align-items: center; height: 21px; margin-bottom: 1px; padding-left: 26px; border-bottom: 1px solid #333; border-radius: 2px; background: #656565; white-space: nowrap; }
.field:has(+ h3) { margin-bottom: 0; }
.field input { appearance: none; width: 12px; height: 12px; margin: 0; border: 2px solid #ccc; background: #fff; position: relative; }
.field input:checked { background: #f2c811; border-color: #f2c811; }
.field input:checked::after { content: ""; position: absolute; left: 2px; top: -1px; width: 4px; height: 7px; border: solid #333; border-width: 0 2px 2px 0; transform: rotate(42deg); }
.field i { width: 21px; padding-left: 5px; font-style: normal; font-size: 14px; color: #aaa; line-height: 16px; }

.status { flex: none; height: 22px; padding-left: 5px; background: #333; color: #fff; font: 12px/20px "Liberation Serif", serif; }
```
